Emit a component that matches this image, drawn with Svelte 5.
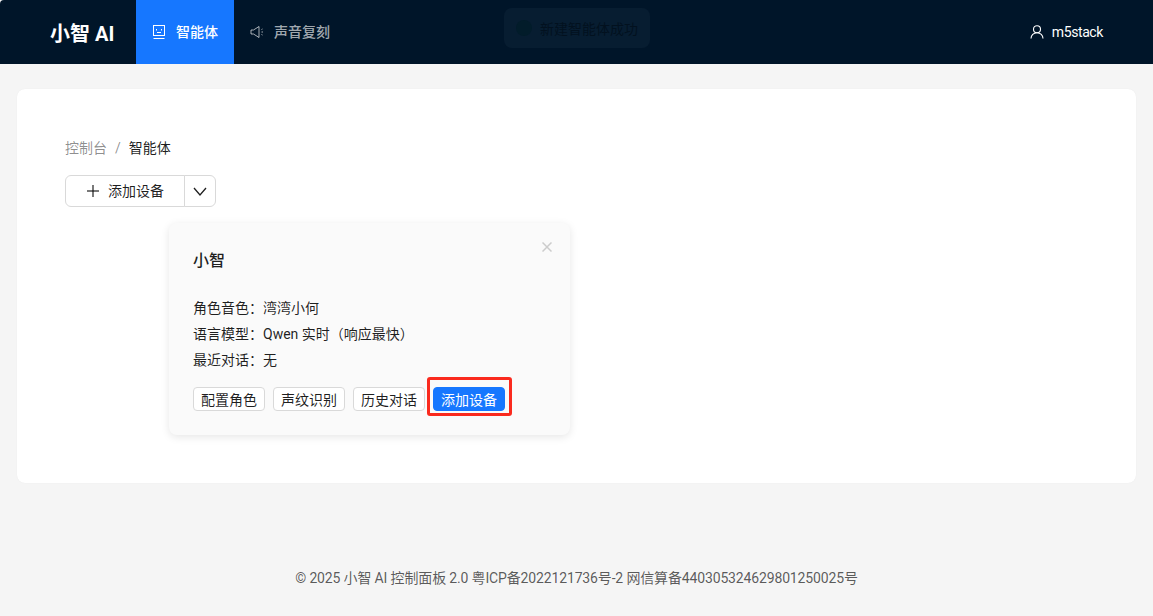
<script lang="ts">
  const info = [
    ['角色音色', '湾湾小何'],
    ['语言模型', 'Qwen 实时（响应最快）'],
    ['最近对话', '无']
  ]
  const actions = ['配置角色', '声纹识别', '历史对话']
</script>

<div class="page">
  <header class="top">
    <div class="logo">小智 AI</div>
    <nav class="menu">
      <a class="item active" href="#agents">
        <svg width="14" height="14" viewBox="0 0 14 14" fill="none" stroke="currentColor" stroke-width="1">
          <rect x="1.5" y="0.5" width="11" height="10"/>
          <line x1="1.5" y1="13.5" x2="12.5" y2="13.5"/>
          <line x1="4.5" y1="4" x2="4.5" y2="5.5"/>
          <line x1="9.5" y1="4" x2="9.5" y2="5.5"/>
          <line x1="5" y1="7.5" x2="9" y2="7.5"/>
        </svg>
        智能体
      </a>
      <a class="item" href="#voice">
        <svg width="14" height="14" viewBox="0 0 14 14" fill="none" stroke="currentColor" stroke-width="1">
          <path d="M1 5h2.5L9 1.5v11L3.5 9H1z"/>
          <line x1="11.5" y1="4.5" x2="12.5" y2="4"/>
          <line x1="11.5" y1="7" x2="13" y2="7"/>
          <line x1="11.5" y1="9.5" x2="12.5" y2="10"/>
        </svg>
        声音复刻
      </a>
    </nav>
    <div class="user">
      <svg width="14" height="14" viewBox="0 0 14 14" fill="none" stroke="currentColor" stroke-width="1.1">
        <circle cx="7" cy="4.2" r="3.5"/>
        <path d="M1 13.5c0-3.2 2.6-5.8 6-5.8s6 2.6 6 5.8"/>
      </svg>
      m5stack
    </div>
  </header>

  <div class="toast">
    <span class="toast-dot"></span>
    新建智能体成功
  </div>

  <main class="content">
    <div class="panel">
      <div class="crumbs">
        <span class="crumb-link">控制台</span>
        <span class="crumb-sep">/</span>
        <span class="crumb-now">智能体</span>
      </div>

      <div class="split">
        <button class="split-main">
          <svg width="14" height="14" viewBox="0 0 14 14" stroke="currentColor" stroke-width="1.2">
            <line x1="7" y1="1" x2="7" y2="13"/>
            <line x1="1" y1="7" x2="13" y2="7"/>
          </svg>
          添加设备
        </button>
        <button class="split-drop" aria-label="more">
          <svg width="14" height="14" viewBox="0 0 14 14" fill="none" stroke="currentColor" stroke-width="1.3">
            <path d="M1 4l6 7 6-7"/>
          </svg>
        </button>
      </div>

      <section class="card">
        <span class="close">
          <svg width="10" height="10" viewBox="0 0 10 10" stroke="currentColor" stroke-width="1.5">
            <line x1="0.5" y1="0.5" x2="9.5" y2="9.5"/>
            <line x1="9.5" y1="0.5" x2="0.5" y2="9.5"/>
          </svg>
        </span>
        <h3>小智</h3>
        <div class="info">
          {#each info as row}
            <div class="row">{row[0]}：{row[1]}</div>
          {/each}
        </div>
        <div class="actions">
          {#each actions as a}
            <button class="small">{a}</button>
          {/each}
          <span class="marked">
            <button class="small primary">添加设备</button>
            <span class="mark"></span>
          </span>
        </div>
      </section>
    </div>
  </main>

  <footer class="foot">© 2025 小智 AI 控制面板 2.0 粤ICP备2022121736号-2 网信算备440305324629801250025号</footer>
</div>

<style>
  :global(body) {
    margin: 0;
    background: #f5f5f5;
    font-family: Roboto, "Noto Sans CJK SC", sans-serif;
  }
  .page {
    height: 616px;
    position: relative;
    overflow: hidden;
    display: flex;
    flex-direction: column;
    font-size: 14px;
    color: rgba(0, 0, 0, 0.88);
  }
  .top {
    height: 64px;
    flex-shrink: 0;
    background: #001529;
    border-top-left-radius: 4px;
    display: flex;
    align-items: center;
    color: #fff;
  }
  .logo {
    width: 136px;
    padding-left: 50px;
    box-sizing: border-box;
    font-size: 20px;
    font-weight: 700;
    white-space: nowrap;
  }
  .menu { display: flex; height: 100%; }
  .item {
    display: flex;
    align-items: center;
    gap: 10px;
    padding: 0 16px 2px;
    color: rgba(255, 255, 255, 0.65);
    text-decoration: none;
    font-weight: 500;
  }
  .item svg { margin-top: 2px; }
  .item.active { background: #1677ff; color: #fff; }
  .user {
    margin-left: auto;
    margin-right: 50px;
    display: flex;
    align-items: center;
    gap: 8px;
    letter-spacing: -0.4px;
  }
  .toast {
    position: absolute;
    left: 504px;
    top: 8px;
    width: 146px;
    height: 40px;
    box-sizing: border-box;
    padding-left: 12px;
    display: flex;
    align-items: center;
    gap: 8px;
    border-radius: 8px;
    background: #071d31;
    color: #02111f;
    font-size: 14px;
  }
  .toast-dot {
    width: 16px;
    height: 16px;
    border-radius: 50%;
    background: #021c2a;
  }
  .content {
    padding: 25px 17px 0;
  }
  .panel {
    height: 394px;
    box-sizing: border-box;
    background: #fff;
    border-radius: 8px;
    padding: 48px;
    box-shadow: 0 0 1px rgba(0, 0, 0, 0.08);
  }
  .crumbs {
    display: flex;
    gap: 8px;
    height: 22px;
    line-height: 22px;
    color: rgba(0, 0, 0, 0.45);
  }
  .crumb-now { color: rgba(0, 0, 0, 0.88); }
  .split {
    display: flex;
    margin-top: 16px;
  }
  .split button {
    height: 32px;
    background: #fff;
    border: 1px solid #d9d9d9;
    font: inherit;
    color: rgba(0, 0, 0, 0.88);
    padding: 0;
    display: flex;
    align-items: center;
    justify-content: center;
  }
  .split-main {
    width: 120px;
    gap: 8px;
    border-radius: 6px 0 0 6px;
  }
  .split .split-main { padding-bottom: 2px; }
  .split-main svg { margin-top: 2px; }
  .split-drop {
    width: 32px;
    margin-left: -1px;
    border-radius: 0 6px 6px 0;
  }
  .card {
    position: relative;
    width: 401px;
    height: 212px;
    box-sizing: border-box;
    margin: 16px 0 0 104px;
    padding: 25px 24px 24px;
    background: #fafafa;
    border-radius: 8px;
    box-shadow: 0 2px 8px rgba(0, 0, 0, 0.1);
  }
  .close {
    position: absolute;
    right: 18px;
    top: 19px;
    display: flex;
    color: #ccc;
  }
  h3 {
    margin: 0;
    font-size: 16px;
    line-height: 26px;
    font-weight: 500;
  }
  .info { margin-top: 21px; }
  .row { height: 26px; line-height: 26px; }
  .actions {
    display: flex;
    gap: 8px;
    margin-top: 14px;
  }
  .small {
    height: 24px;
    width: 72px;
    padding: 0 0 1px;
    font: inherit;
    background: #fff;
    border: 1px solid #d9d9d9;
    border-radius: 4px;
    color: rgba(0, 0, 0, 0.88);
  }
  .primary {
    display: block;
    background: #1677ff;
    border-color: #1677ff;
    color: #fff;
  }
  .marked { position: relative; }
  .mark {
    position: absolute;
    left: -6px;
    right: -7px;
    top: -10px;
    bottom: -5px;
    border: 3px solid #fa2a1e;
    border-radius: 3px;
  }
  .foot {
    margin-top: 84px;
    text-align: center;
    color: rgba(0, 0, 0, 0.65);
    line-height: 22px;
    letter-spacing: -0.15px;
  }
</style>
